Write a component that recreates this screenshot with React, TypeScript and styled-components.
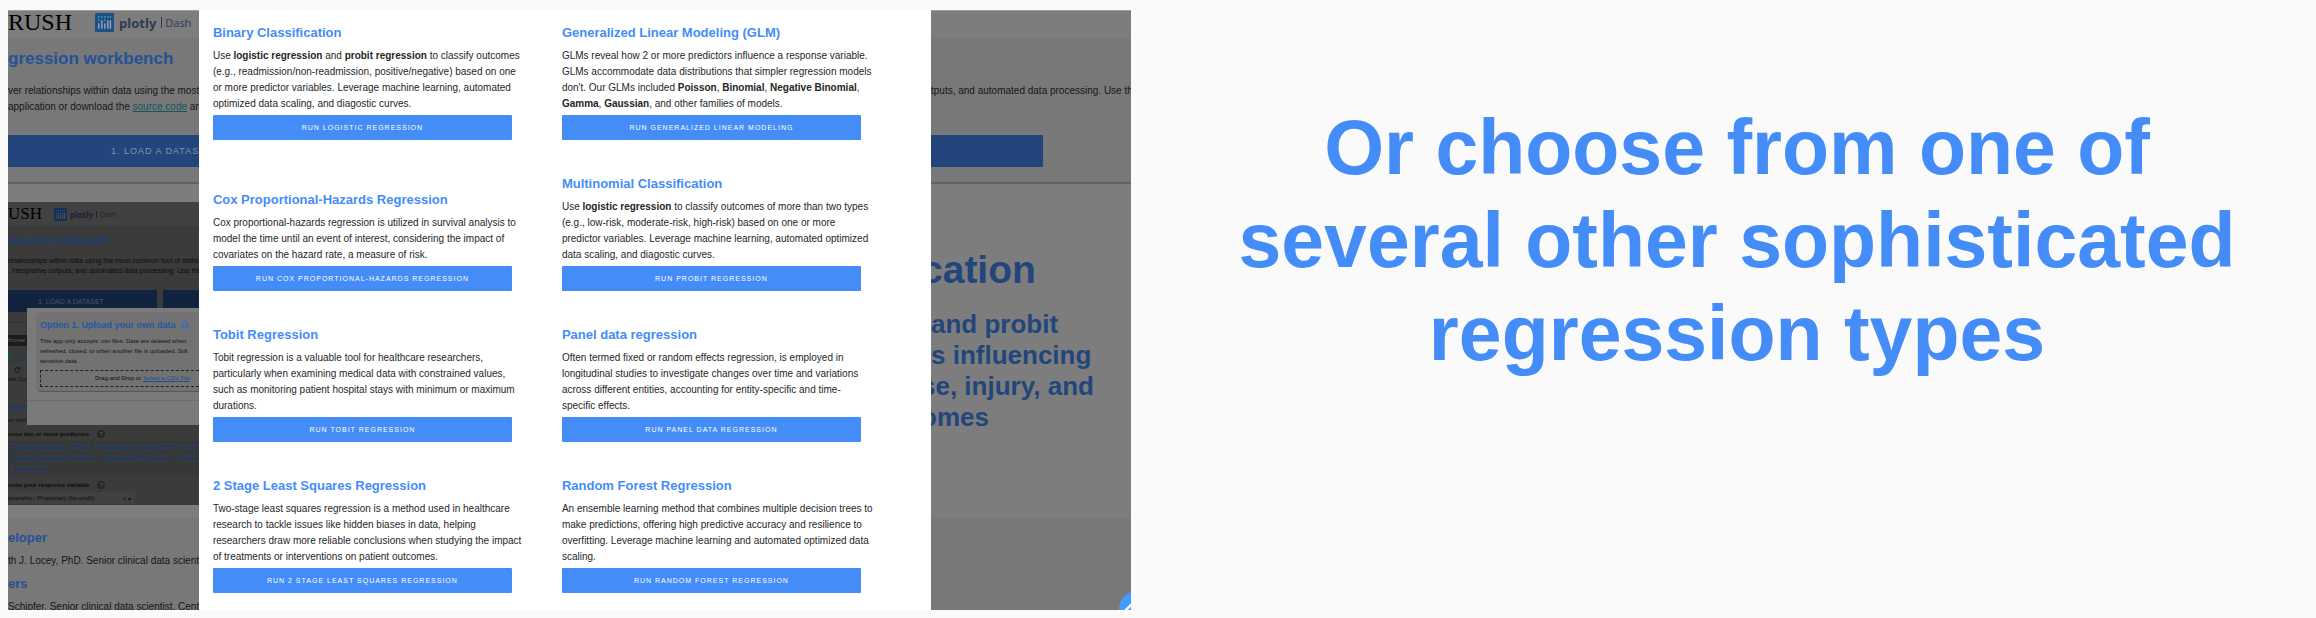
import React from 'react';
import styled, { createGlobalStyle } from 'styled-components';

const Global = createGlobalStyle`
  * { box-sizing: border-box; }
  body {
    margin: 0;
    background: #fafafa;
    font-family: "Liberation Sans", Arial, sans-serif;
  }
  h1, h2, h3, p { margin: 0; }
`;

const blue = '#448df8';
const dimBlue = '#22467c';
const dimPage = '#7d7d7d';
const dimSection = '#787878';

const Page = styled.main`
  display: grid;
  grid-template-columns: 1fr 1fr;
`;

const Shot = styled.section`
  position: relative;
  display: grid;
  grid-template-columns: 17% 1fr 200px;
  margin: 10px 27px 8px 8px;
  overflow: hidden;
`;

const Strip = styled.div`
  min-width: 0;
  height: 600px;
  overflow: hidden;
  white-space: nowrap;
  background: ${dimPage};
  color: #161616;
  border-top: 1px solid #a0a0a0;
`;

const Header = styled.header<{ $small?: boolean }>`
  display: flex;
  align-items: center;
  height: ${p => (p.$small ? 24 : 27)}px;
  padding-bottom: ${p => (p.$small ? 0 : 4)}px;
  gap: ${p => (p.$small ? 12 : 23)}px;
`;

const Rush = styled.span<{ $small?: boolean }>`
  font-family: "Liberation Serif", "Times New Roman", serif;
  font-size: ${p => (p.$small ? 17 : 24)}px;
  color: #000;
`;

const Brand = styled.span<{ $small?: boolean }>`
  display: flex;
  align-items: center;
  gap: ${p => (p.$small ? 3 : 5)}px;
  font-family: "Open Sans", sans-serif;
  font-size: ${p => (p.$small ? 7 : 11)}px;
  color: ${p => (p.$small ? '#1a2130' : '#2d3a52')};
  b { font-size: ${p => (p.$small ? 8 : 13)}px; }
  i {
    font-style: normal;
    padding-left: 3px;
    border-left: 1px solid currentColor;
    line-height: 1;
  }
`;

const Section = styled.div`
  height: 144px;
  padding-top: 9px;
  background: ${dimSection};
`;

const AppTitle = styled.h1<{ $small?: boolean }>`
  margin-top: ${p => (p.$small ? 2 : 0)}px;
  font-size: ${p => (p.$small ? 11 : 17)}px;
  line-height: 24px;
  color: ${p => (p.$small ? '#1a3e7a' : '#25509a')};
`;

const Intro = styled.p`
  margin-top: 12px;
  height: 32px;
  font-size: 10px;
  line-height: 16px;
  a { color: #12545f; }
`;

const LoadButton = styled.button<{ $short?: boolean }>`
  display: block;
  width: ${p => (p.$short ? '56%' : '100%')};
  height: 32px;
  margin: 20px 0 16px;
  padding: 0 0 0 103px;
  border: 0;
  border-radius: ${p => (p.$short ? '0 1px 1px 0' : '0')};
  background: ${dimBlue};
  color: #8592a8;
  font: 9px "Liberation Sans", sans-serif;
  letter-spacing: 1px;
  text-align: left;
  white-space: nowrap;
  overflow: hidden;
`;

const Rule = styled.div`
  height: 2px;
  background: #626262;
`;

const Preview = styled.div`
  position: relative;
  height: 303px;
  margin-top: 18px;
  overflow: hidden;
  background: #3b3b3b;
  color: #0b0b0b;
  font-size: 6px;
`;

const PreviewHeader = styled.div`
  background: #414141;
`;

const PreviewIntro = styled.p`
  margin-top: 4px;
  font-size: 7px;
  line-height: 10px;
`;

const PreviewButtons = styled.div`
  display: grid;
  grid-template-columns: 149px 1fr;
  gap: 6px;
  margin-top: 14px;
`;

const PreviewButton = styled.button`
  height: 22px;
  padding: 0 0 0 30px;
  border: 0;
  background: #11233f;
  color: #4b5568;
  font: 7px "Liberation Sans", sans-serif;
  text-align: left;
`;

const BrowserEdge = styled.div`
  height: 79px;
  margin-top: 10px;
  border-top: 1px solid #303030;
  padding-top: 12px;
  b {
    display: block;
    width: 19px;
    height: 11px;
    background: #1c1c1c;
    color: #666;
    font-weight: 400;
    line-height: 11px;
  }
  svg { display: block; }
  small {
    display: block;
    font-size: 5px;
    line-height: 10px;
  }
`;

const PreviewHeading = styled.h3`
  font-size: 8px;
  line-height: 12px;
  color: #193a72;
`;

const PreviewLine = styled.p<{ $bold?: boolean }>`
  display: flex;
  align-items: center;
  gap: 8px;
  font-size: 6px;
  font-weight: ${p => (p.$bold ? 700 : 400)};
  line-height: 14px;
`;

const Tags = styled.div`
  height: 34px;
  margin-bottom: 3px;
  background: #363636;
  overflow: hidden;
`;

const TagRow = styled.div`
  display: flex;
  gap: 5px;
  padding-left: 3px;
  height: 11px;
  align-items: center;
`;

const Tag = styled.span`
  padding: 0 1px;
  font-size: 6px;
  line-height: 8px;
  color: #183768;
  background: #343a42;
`;

const Choice = styled.div`
  display: flex;
  align-items: center;
  justify-content: space-between;
  width: 127px;
  height: 12px;
  padding-right: 4px;
  background: #404040;
  border-radius: 2px;
`;

const Help = styled.span<{ $blue?: boolean }>`
  display: inline-flex;
  align-items: center;
  justify-content: center;
  width: 8px;
  height: 8px;
  border-radius: 50%;
  font-size: 6px;
  font-weight: 700;
  line-height: 8px;
  background: ${p => (p.$blue ? '#4a6c9c' : '#262626')};
  color: ${p => (p.$blue ? '#777' : '#555')};
`;

const UploadDialog = styled.div`
  position: absolute;
  top: 106px;
  left: 19px;
  right: 0;
  height: 117px;
  padding: 4px 0 0 9px;
  background: #7a7a7a;
`;

const UploadCard = styled.div`
  height: 80px;
  padding: 7px 0 0 4px;
  border-radius: 6px 0 0 6px;
  background: #727272;
  border-bottom: 1px solid #565656;
  h3 {
    display: flex;
    align-items: center;
    gap: 5px;
    font-size: 9px;
    line-height: 12px;
    color: #2456a5;
  }
  p {
    margin-top: 5px;
    font-size: 6px;
    line-height: 10px;
    color: #141414;
  }
`;

const UploadFooter = styled.div`
  height: 24px;
  margin: 8px 0 0 -9px;
  border-top: 1px solid #6c6c6c;
`;

const DropZone = styled.div`
  height: 17px;
  margin-top: 4px;
  padding-left: 54px;
  border: 1px dashed #222;
  border-right: 0;
  font-size: 6px;
  line-height: 15px;
  a { color: #1e4d98; }
`;

const Footer = styled.div`
  height: 100px;
  padding-top: 8px;
  background: ${dimSection};
  h2 {
    font-size: 13px;
    line-height: 24px;
    color: #25509a;
  }
  p {
    font-size: 10px;
    line-height: 22px;
  }
`;

const Spacer = styled.div`
  height: 13px;
`;

const Pitch = styled.div`
  height: 334px;
  padding-top: 62px;
  color: ${dimBlue};
`;

const PitchLine = styled.p<{ $clipped?: boolean; $large?: boolean }>`
  margin-left: ${p => (p.$clipped ? -10 : 0)}px;
  font-size: ${p => (p.$large ? 39 : 26)}px;
  line-height: ${p => (p.$large ? 48 : 31)}px;
  margin-bottom: ${p => (p.$large ? 15 : 0)}px;
  font-weight: 700;
`;

const Chat = styled.button`
  position: absolute;
  right: -24px;
  bottom: -17px;
  width: 36px;
  height: 36px;
  padding: 0;
  border: 0;
  border-radius: 50%;
  background: #449bff;
  svg { display: block; }
`;

const Dialog = styled.div`
  display: grid;
  grid-template-columns: 299px 299px;
  column-gap: 50px;
  grid-template-rows: 130px repeat(3, 151px);
  align-items: end;
  align-content: start;
  padding-left: 14px;
  background: #fff;
`;

const Card = styled.article`
  h3 {
    font-size: 13px;
    line-height: 18px;
    color: ${blue};
  }
  p {
    margin: 6px 0 3px;
    font-size: 10px;
    line-height: 16px;
    color: #262626;
    white-space: nowrap;
  }
`;

const RunButton = styled.button`
  display: block;
  width: 100%;
  height: 25px;
  padding: 0;
  border: 0;
  border-radius: 1px;
  background: ${blue};
  color: #fff;
  font: 7px "Liberation Sans", sans-serif;
  letter-spacing: 1px;
`;

const Hero = styled.section`
  padding: 101px 60px 0;
  text-align: center;
  h1 {
    font-size: 77px;
    line-height: 93px;
    color: ${blue};
  }
`;

const PlotlyMark = ({ size, dim }: { size: number; dim?: boolean }) => (
  <svg width={size} height={size} viewBox="0 0 19 19" aria-hidden="true">
    <rect width="19" height="19" rx="1" fill={dim ? '#123256' : '#1f4f88'} />
    <g fill={dim ? '#47505a' : '#8c99a8'}>
      <rect x="3" y="10" width="1.6" height="6" rx=".8" />
      <rect x="6" y="7" width="1.6" height="9" rx=".8" />
      <rect x="9" y="10" width="1.6" height="6" rx=".8" />
      <rect x="12" y="7" width="1.6" height="9" rx=".8" />
      <rect x="14.6" y="7" width="1.6" height="9" rx=".8" />
    </g>
    <g fill={dim ? '#205a66' : '#3d9aa8'}>
      <circle cx="3.8" cy="4" r=".9" />
      <circle cx="6.8" cy="4" r=".9" />
      <circle cx="9.8" cy="4" r=".9" />
      <circle cx="12.8" cy="4" r=".9" />
      <circle cx="15.4" cy="4" r=".9" />
      <circle cx="3.8" cy="7.2" r=".9" />
      <circle cx="9.8" cy="7.2" r=".9" />
    </g>
  </svg>
);

const BrowserControls = () => (
  <svg width="19" height="28" viewBox="0 0 19 28" aria-hidden="true">
    <rect y="1" width="19" height="16" fill="#343a3d" />
    <circle cx="1" cy="9" r="2.5" fill="#155a1c" />
    <path d="M16 14L19 9V14Z" fill="#163f5c" />
    <path d="M11.6 22.4A2.6 2.6 0 1 0 11.6 25.6M12 20.8V23H9.8" fill="none" stroke="#181818" />
  </svg>
);

const models: { title: string; lines: React.ReactNode[]; run: string }[] = [
  {
    title: 'Binary Classification',
    lines: [
      <>Use <b>logistic regression</b> and <b>probit regression</b> to classify outcomes</>,
      '(e.g., readmission/non-readmission, positive/negative) based on one',
      'or more predictor variables. Leverage machine learning, automated',
      'optimized data scaling, and diagostic curves.',
    ],
    run: 'RUN LOGISTIC REGRESSION',
  },
  {
    title: 'Generalized Linear Modeling (GLM)',
    lines: [
      'GLMs reveal how 2 or more predictors influence a response variable.',
      'GLMs accommodate data distributions that simpler regression models',
      <>don't. Our GLMs included <b>Poisson</b>, <b>Binomial</b>, <b>Negative Binomial</b>,</>,
      <><b>Gamma</b>, <b>Gaussian</b>, and other families of models.</>,
    ],
    run: 'RUN GENERALIZED LINEAR MODELING',
  },
  {
    title: 'Cox Proportional-Hazards Regression',
    lines: [
      'Cox proportional-hazards regression is utilized in survival analysis to',
      'model the time until an event of interest, considering the impact of',
      'covariates on the hazard rate, a measure of risk.',
    ],
    run: 'RUN COX PROPORTIONAL-HAZARDS REGRESSION',
  },
  {
    title: 'Multinomial Classification',
    lines: [
      <>Use <b>logistic regression</b> to classify outcomes of more than two types</>,
      '(e.g., low-risk, moderate-risk, high-risk) based on one or more',
      'predictor variables. Leverage machine learning, automated optimized',
      'data scaling, and diagostic curves.',
    ],
    run: 'RUN PROBIT REGRESSION',
  },
  {
    title: 'Tobit Regression',
    lines: [
      'Tobit regression is a valuable tool for healthcare researchers,',
      'particularly when examining medical data with constrained values,',
      'such as monitoring patient hospital stays with minimum or maximum',
      'durations.',
    ],
    run: 'RUN TOBIT REGRESSION',
  },
  {
    title: 'Panel data regression',
    lines: [
      'Often termed fixed or random effects regression, is employed in',
      'longitudinal studies to investigate changes over time and variations',
      'across different entities, accounting for entity-specific and time-',
      'specific effects.',
    ],
    run: 'RUN PANEL DATA REGRESSION',
  },
  {
    title: '2 Stage Least Squares Regression',
    lines: [
      'Two-stage least squares regression is a method used in healthcare',
      'research to tackle issues like hidden biases in data, helping',
      'researchers draw more reliable conclusions when studying the impact',
      'of treatments or interventions on patient outcomes.',
    ],
    run: 'RUN 2 STAGE LEAST SQUARES REGRESSION',
  },
  {
    title: 'Random Forest Regression',
    lines: [
      'An ensemble learning method that combines multiple decision trees to',
      'make predictions, offering high predictive accuracy and resilience to',
      'overfitting. Leverage machine learning and automated optimized data',
      'scaling.',
    ],
    run: 'RUN RANDOM FOREST REGRESSION',
  },
];

const tags = [
  ['Bed-days available', '×  Beds', '×  Employees on payrol (FTE)', '×  Inpatient charges'],
  ['Inpatient discharges, Medicare', '×  Medicare IPPS payment', '×  Medicare inpatient'],
  ['Total salaries'],
];

export default function App() {
  return (
    <>
      <Global />
      <Page>
        <Shot>
          <Strip>
            <Header>
              <Rush>RUSH</Rush>
              <Brand><PlotlyMark size={19} /><b>plotly</b><i>Dash</i></Brand>
            </Header>
            <Section>
              <AppTitle>gression workbench</AppTitle>
              <Intro>
                ver relationships within data using the most<br />
                application or download the <a href="#source">source code</a> and
              </Intro>
              <LoadButton>1. LOAD A DATASET</LoadButton>
            </Section>
            <Rule />
            <Preview>
              <PreviewHeader>
                <Header $small>
                  <Rush $small>USH</Rush>
                  <Brand $small><PlotlyMark size={13} dim /><b>plotly</b><i>Dash</i></Brand>
                </Header>
              </PreviewHeader>
              <AppTitle as="h2" $small>ression workbench</AppTitle>
              <PreviewIntro>
                relationships within data using the most common tool of statistical<br />
                , interpretive outputs, and automated data processing. Use this w
              </PreviewIntro>
              <PreviewButtons>
                <PreviewButton>1. LOAD A DATASET</PreviewButton>
                <PreviewButton aria-label="Next step" />
              </PreviewButtons>
              <BrowserEdge>
                <b>hrome</b>
                <BrowserControls />
                <small>eith J Lo</small>
              </BrowserEdge>
              <PreviewHeading>onduct</PreviewHeading>
              <PreviewLine>en trying</PreviewLine>
              <PreviewLine $bold>oose two or more predictors <Help>?</Help></PreviewLine>
              <Tags>
                {tags.map((row, i) => (
                  <TagRow key={i}>{row.map(t => <Tag key={t}>{t}</Tag>)}</TagRow>
                ))}
              </Tags>
              <PreviewLine $bold>oose your response variable <Help>?</Help></PreviewLine>
              <Choice><span>wnership - Proprietary (for-profit)</span><span>× ▾</span></Choice>
              <UploadDialog>
                <UploadCard>
                  <h3>Option 1. Upload your own data <Help $blue>?</Help></h3>
                  <p>
                    This app only accepts .csv files. Data are deleted when<br />
                    refreshed, closed, or when another file is uploaded. Still<br />
                    sensitive data.
                  </p>
                  <DropZone>Drag and Drop or <a href="#csv">Select a CSV File</a></DropZone>
                </UploadCard>
                <UploadFooter />
              </UploadDialog>
            </Preview>
            <Spacer />
            <Footer>
              <h2>eloper</h2>
              <p>th J. Locey, PhD. Senior clinical data scientist</p>
              <h2>ers</h2>
              <p>Schipfer. Senior clinical data scientist. Center</p>
            </Footer>
          </Strip>
          <Dialog role="dialog" aria-label="Regression types">
            {models.map(m => (
              <Card key={m.title}>
                <h3>{m.title}</h3>
                <p>
                  {m.lines.map((line, i) => (
                    <React.Fragment key={i}>{i > 0 && <br />}{line}</React.Fragment>
                  ))}
                </p>
                <RunButton>{m.run}</RunButton>
              </Card>
            ))}
          </Dialog>
          <Strip>
            <Header />
            <Section>
              <AppTitle>&nbsp;</AppTitle>
              <Intro>tputs, and automated data processing. Use this</Intro>
              <LoadButton $short aria-label="Next step" />
            </Section>
            <Rule />
            <Pitch>
              <PitchLine $large $clipped>cation</PitchLine>
              <PitchLine>and probit</PitchLine>
              <PitchLine>s influencing</PitchLine>
              <PitchLine $clipped>se, injury, and</PitchLine>
              <PitchLine $clipped>omes</PitchLine>
            </Pitch>
            <Footer />
          </Strip>
          <Chat aria-label="Edit">
            <svg width="36" height="36" viewBox="0 0 36 36" aria-hidden="true">
              <path d="M6 20L13 13" stroke="#fff" strokeWidth="2.5" />
            </svg>
          </Chat>
        </Shot>
        <Hero>
          <h1>Or choose from one of several other sophisticated regression types</h1>
        </Hero>
      </Page>
    </>
  );
}
